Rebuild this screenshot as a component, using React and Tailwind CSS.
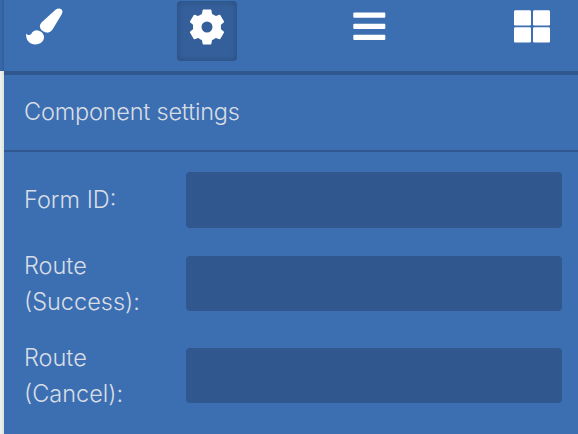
function BrushIcon() {
  return (
    <svg className="w-[38px] h-[38px]" viewBox="0 0 38 38" fill="currentColor">
      <path d="M29.5 1.7C31.3.3 33.7-.1 35.3 1.2c1.5 1.3 1.4 3 .4 5L27 20.8c-1.5 2.5-3.8 4.3-6.4 3.8-3.4-.7-6.4-3-6.7-5.8-.2-1.8.8-3.5 2.4-5z" />
      <path d="M.2 25.4c1.5 1.9 3.4 2.2 5 .5 1.5-2.6 3.5-3.8 6.4-3.5 3.4.4 6.2 3 6.4 6.2.1 4.7-3.5 7.8-8.6 7.8C3.4 36.4-.6 32 .2 25.4z" />
    </svg>
  );
}

const TEETH = [0, 60, 120, 180, 240, 300];

function GearIcon() {
  return (
    <svg className="w-9 h-9" viewBox="-18 -18 36 36" fill="currentColor">
      <circle r="9.1" fill="none" stroke="currentColor" strokeWidth="7.2" />
      {TEETH.map((angle) => (
        <path
          key={angle}
          transform={`rotate(${angle})`}
          d="M-3.5-17.5h7q.8 0 .9.8l.6 3.4q1 1 2.6 1.6L4-8h-8l-3.6-3.7q1.6-.6 2.6-1.6l.6-3.4q.1-.8.9-.8z"
        />
      ))}
    </svg>
  );
}

function BarsIcon() {
  return (
    <svg className="w-[33px] h-7" viewBox="0 0 33 28" fill="currentColor">
      <rect x=".3" y="0.4" width="32" height="5.4" rx="1" />
      <rect x=".3" y="11.8" width="32" height="5.3" rx="1" />
      <rect x=".3" y="22.8" width="32" height="5.2" rx="1" />
    </svg>
  );
}

function BlocksIcon() {
  return (
    <svg className="w-9 h-[33px]" viewBox="0 0 36 33" fill="currentColor">
      <rect x="0" y=".3" width="17" height="15.3" rx="1.4" />
      <rect x="19" y=".3" width="17" height="15.3" rx="1.4" />
      <rect x="0" y="17.3" width="17" height="15.3" rx="1.4" />
      <rect x="19" y="17.3" width="17" height="15.3" rx="1.4" />
    </svg>
  );
}

const FIELDS = [
  { id: 'form-id', lines: ['Form ID:'], row: 'h-14', input: 'h-14' },
  { id: 'route-success', lines: ['Route', '(Success):'], row: 'h-[72px]', input: 'h-[55px] mb-px' },
  { id: 'route-cancel', lines: ['Route', '(Cancel):'], row: 'h-[72px]', input: 'h-[55px] mb-px' },
];

function Field({ id, lines, row, input }) {
  return (
    <div className={`flex items-center ${row}`}>
      <label htmlFor={id} className="w-[162px] shrink-0 leading-9">
        {lines.map((line) => (
          <span key={line} className="block">{line}</span>
        ))}
      </label>
      <input id={id} className={`w-[376px] rounded-[4px] bg-[#30588f] px-3 outline-none ${input}`} />
    </div>
  );
}

export default function App() {
  return (
    <div className="flex w-full h-screen overflow-hidden bg-[#3c6fb2] font-['Inter',sans-serif] text-[23.5px] font-light text-[#d8dde5]">
      {/* Edge of the canvas behind the panel */}
      <div className="w-1 shrink-0 flex flex-col">
        <div className="h-[71px] bg-linear-to-r from-[#396aab] to-[#335f9c]" />
        <div className="flex-1 bg-linear-to-r from-[#f0f3ef] to-[#dbe3df]" />
      </div>

      <div className="flex-1 min-w-0">
        {/* Tabs */}
        <div className="flex h-[75px] items-start border-b-4 border-[#30588f] pl-[22px] text-white">
          <button className="mt-2"><BrushIcon /></button>
          <button className="mt-px ml-[113px] flex h-[60px] w-[60px] justify-center rounded-[4px] bg-[#345f9a] pt-[7.5px] shadow-[inset_0_0_6px_rgba(0,0,0,0.2)]">
            <GearIcon />
          </button>
          <button className="mt-3 ml-[116px]"><BarsIcon /></button>
          <button className="mt-[10px] ml-32"><BlocksIcon /></button>
        </div>

        <h2 className="flex h-[77px] items-center border-b-2 border-[#30588f] pb-0.5 pl-5 tracking-[-0.2px]">
          Component settings
        </h2>

        <form className="flex flex-col gap-5 pt-5 pl-5">
          {FIELDS.map((field) => (
            <Field key={field.id} {...field} />
          ))}
        </form>
      </div>
    </div>
  );
}
